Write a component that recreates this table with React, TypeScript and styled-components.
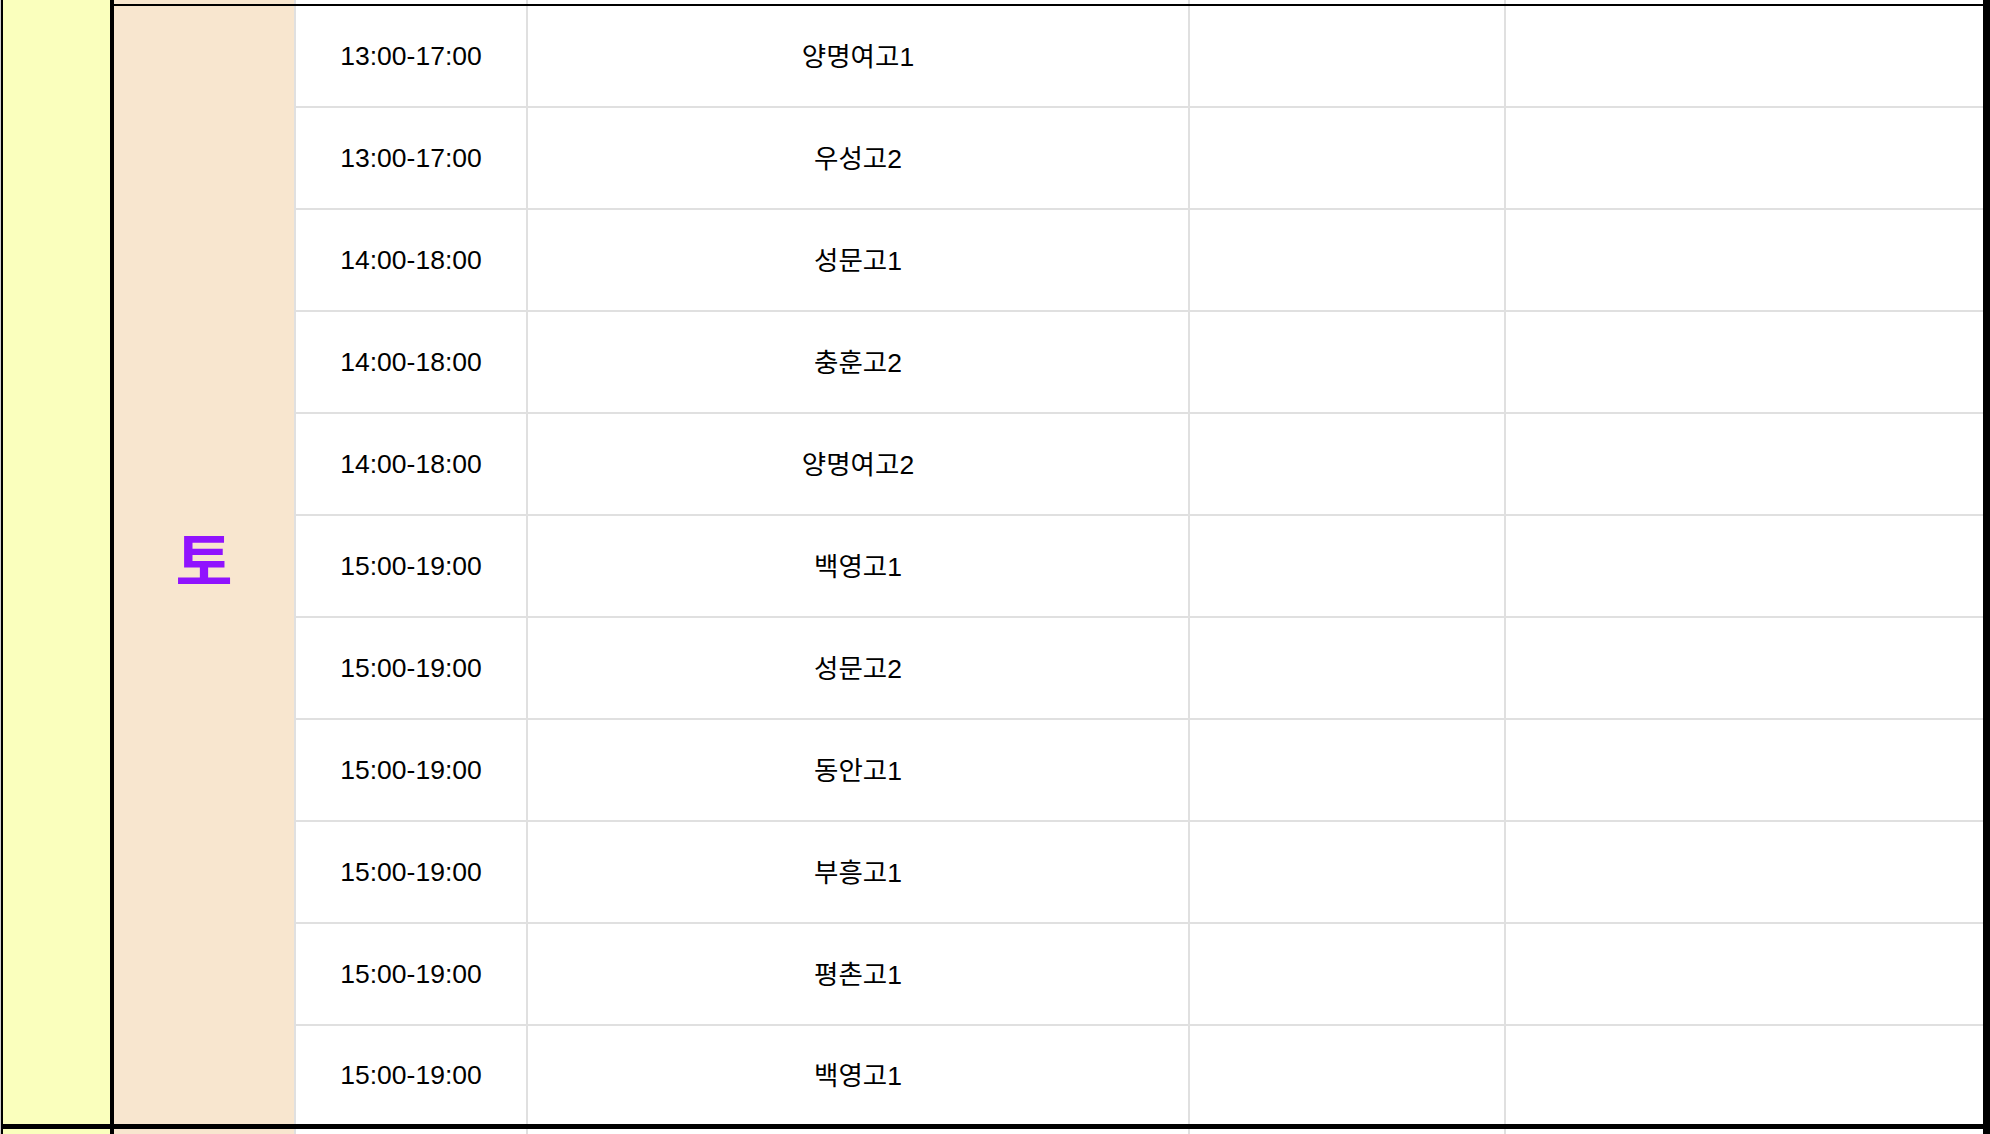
import React from 'react';
import styled, { createGlobalStyle } from 'styled-components';

type Slot = { time: string; school: string };

const SATURDAY_SLOTS: Slot[] = [
  { time: '13:00-17:00', school: '양명여고1' },
  { time: '13:00-17:00', school: '우성고2' },
  { time: '14:00-18:00', school: '성문고1' },
  { time: '14:00-18:00', school: '충훈고2' },
  { time: '14:00-18:00', school: '양명여고2' },
  { time: '15:00-19:00', school: '백영고1' },
  { time: '15:00-19:00', school: '성문고2' },
  { time: '15:00-19:00', school: '동안고1' },
  { time: '15:00-19:00', school: '부흥고1' },
  { time: '15:00-19:00', school: '평촌고1' },
  { time: '15:00-19:00', school: '백영고1' },
];

const COLOR = {
  MONTH: '#faffbd',
  DAY: '#f8e6cf',
  LINE: '#e0e0e0',
  PURPLE: '#9013fe',
};

const GlobalStyle = createGlobalStyle`
  body {
    margin: 0;
    background: #fff;
    font-family: 'Liberation Sans', 'Noto Sans CJK KR', sans-serif;
    color: #000;
  }
`;

// the empty cells of a row that is only partly scrolled into view
const EmptyCells = () => (
  <>
    <Cell />
    <Cell />
    <Cell />
    <Cell />
  </>
);

const App = () => {
  return (
    <Frame>
      <GlobalStyle />
      <Sheet>
        <Group>
          <MonthCell />
          <DayArea>
            <Strip $height={4}>
              <DayCell />
              <EmptyCells />
            </Strip>
            <DayBody>
              <DayCell>
                <DayLabel>토</DayLabel>
              </DayCell>
              <Slots>
                {SATURDAY_SLOTS.map((slot, i) => (
                  <SlotRow key={i} $last={i === SATURDAY_SLOTS.length - 1}>
                    <Cell>{slot.time}</Cell>
                    <Cell $lift>{slot.school}</Cell>
                    <Cell />
                    <Cell />
                  </SlotRow>
                ))}
              </Slots>
            </DayBody>
          </DayArea>
        </Group>
        <GroupDivider />
        <Strip $height={5}>
          <MonthCell />
          <DayCell />
          <EmptyCells />
        </Strip>
      </Sheet>
    </Frame>
  );
};

const Frame = styled.div`
  width: 1990px;
  height: 1134px;
  overflow: hidden;
  box-sizing: border-box;
  border-left: 1px solid #cfcfcf;
`;

const Sheet = styled.div`
  display: flex;
  flex-direction: column;
  height: 100%;
  box-sizing: border-box;
  border-left: 2px solid #000;
  border-right: 7px solid #000;
`;

const Group = styled.div`
  display: flex;
  height: 1124px;
`;

const MonthCell = styled.div`
  flex: 0 0 111px;
  box-sizing: border-box;
  background: ${COLOR.MONTH};
  border-right: 4px solid #000;
`;

const DayArea = styled.div`
  flex: 1;
  display: flex;
  flex-direction: column;
`;

const Strip = styled.div<{ $height: number }>`
  display: grid;
  grid-template-columns: ${({ $height }) =>
    $height === 5 ? '111px 180px 232px 662px 316px 1fr' : '180px 232px 662px 316px 1fr'};
  height: ${({ $height }) => $height}px;
  flex: 0 0 auto;
`;

const DayBody = styled.div`
  flex: 1;
  display: flex;
  border-top: 2px solid #000;
`;

const DayCell = styled.div`
  flex: 0 0 180px;
  display: flex;
  align-items: center;
  justify-content: center;
  background: ${COLOR.DAY};
`;

const DayLabel = styled.span`
  font-family: 'Noto Sans CJK KR', sans-serif;
  font-size: 62px;
  font-weight: 700;
  color: ${COLOR.PURPLE};
  line-height: 1;
  padding-bottom: 14px;
`;

const Slots = styled.div`
  flex: 1;
  display: flex;
  flex-direction: column;
`;

const SlotRow = styled.div<{ $last: boolean }>`
  display: grid;
  grid-template-columns: 232px 662px 316px 1fr;
  height: ${({ $last }) => ($last ? '98px' : '102px')};
  box-sizing: border-box;
  border-bottom: ${({ $last }) => ($last ? 'none' : `2px solid ${COLOR.LINE}`)};
`;

const Cell = styled.div<{ $lift?: boolean }>`
  display: flex;
  align-items: center;
  justify-content: center;
  box-sizing: border-box;
  border-left: 2px solid ${COLOR.LINE};
  background: #fff;
  font-family: 'Liberation Sans', 'Noto Sans CJK KR', sans-serif;
  font-size: 26.5px;
  white-space: nowrap;
  overflow: hidden;
  padding-bottom: ${({ $lift }) => ($lift ? '3px' : '0')};
`;

const GroupDivider = styled.div`
  flex: 0 0 5px;
  background: #000;
`;

export default App;
